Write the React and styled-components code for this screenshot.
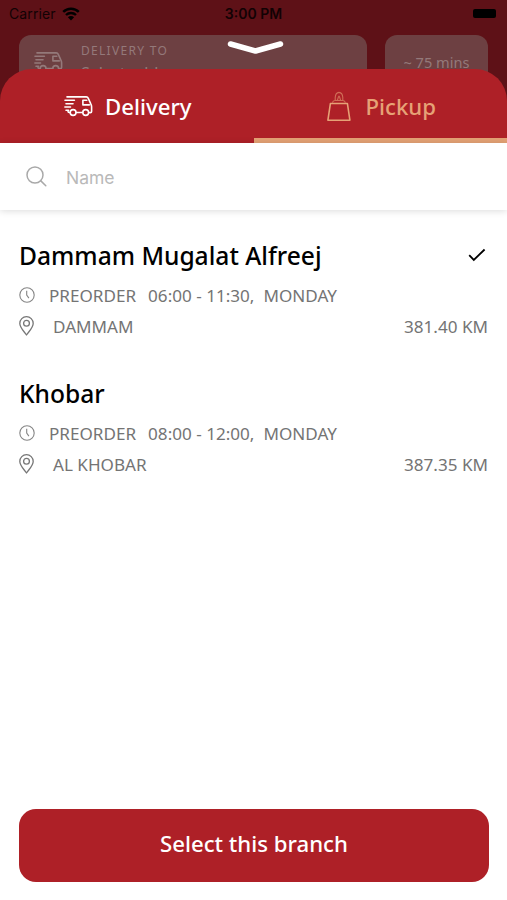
import React, { useState } from "react";
import styled, { createGlobalStyle } from "styled-components";

const GlobalStyle = createGlobalStyle`
  * {
    box-sizing: border-box;
  }
  body {
    margin: 0;
    font-family: "Noto Sans", "Open Sans", sans-serif;
  }
  button {
    font-family: inherit;
    border: none;
    padding: 0;
    cursor: pointer;
  }
  svg {
    display: block;
    flex-shrink: 0;
  }
`;

const Screen = styled.div`
  position: relative;
  width: 507px;
  height: 900px;
  display: flex;
  flex-direction: column;
  overflow: hidden;
  background: #5e1117;
`;

const StatusBar = styled.div`
  height: 35px;
  padding: 0 11px 8px 9px;
  display: grid;
  grid-template-columns: 1fr auto 1fr;
  align-items: center;
  font-family: Inter, sans-serif;
  font-size: 14px;
  color: #120204;
`;

const Carrier = styled.div`
  display: flex;
  align-items: center;
  gap: 6px;
  letter-spacing: 0.1px;
`;

const Clock = styled.div`
  padding-left: 2px;
  font-size: 14px;
  font-weight: 600;
`;

const Battery = styled.div`
  justify-self: end;
  width: 23px;
  height: 9px;
  border-radius: 2px;
  background: #000;
`;

const OrderBar = styled.div`
  height: 70px;
  flex-shrink: 0;
  padding: 0 18px 0 19px;
  display: flex;
  gap: 18px;
`;

const OrderCard = styled.div`
  width: ${(props) => props.width}px;
  height: 60px;
  display: flex;
  border-radius: 12px;
  background: #6d4042;
  color: #94797a;
`;

const Address = styled.div`
  padding: 6px 0 0 15px;
  display: flex;
  gap: 18px;
  svg {
    margin-top: 11px;
  }
`;

const AddressLabel = styled.div`
  padding-top: 1px;
  font-size: 12px;
  line-height: 18px;
  letter-spacing: 1.3px;
`;

const AddressValue = styled.div`
  margin-top: 1px;
  font-size: 16px;
  line-height: 24px;
`;

const Duration = styled.div`
  width: 100%;
  padding-top: 16px;
  text-align: center;
  font-size: 14.6px;
  line-height: 22px;
`;

const CloseButton = styled.button`
  position: absolute;
  top: 40px;
  left: 227px;
  background: none;
`;

const Sheet = styled.div`
  flex: 1;
  margin-top: -36px;
  display: flex;
  flex-direction: column;
  border-radius: 32px 32px 0 0;
  overflow: hidden;
  background: linear-gradient(#ae2027 74px, #fff 74px);
`;

const Tabs = styled.div`
  height: 74px;
  flex-shrink: 0;
  display: flex;
`;

const Tab = styled.button`
  flex: 1;
  display: flex;
  align-items: center;
  justify-content: center;
  gap: ${(props) => props.gap}px;
  padding-top: ${(props) => (props.active ? 5 : 0)}px;
  padding-left: 2px;
  border-bottom: ${(props) => (props.active ? "5px solid #e3a174" : "none")};
  background: none;
  color: ${(props) => (props.active ? "#e6a276" : "#fff")};
  font-size: 22.2px;
  font-weight: 500;
`;

const Search = styled.label`
  height: 67px;
  flex-shrink: 0;
  padding: 0 26px;
  display: flex;
  align-items: center;
  gap: 19px;
  box-shadow: 0 1px 7px rgba(0, 0, 0, 0.14);
`;

const SearchInput = styled.input`
  flex: 1;
  padding: 2px 0 0;
  border: none;
  outline: none;
  font-family: Inter, sans-serif;
  font-size: 17.5px;
  color: #333;
  &::placeholder {
    color: #b9b9b9;
    opacity: 1;
  }
`;

const BranchList = styled.div`
  flex: 1;
  padding: 26px 19px 0;
`;

const Branch = styled.div`
  height: 138px;
  cursor: pointer;
`;

const BranchHead = styled.div`
  height: 38px;
  display: flex;
  align-items: center;
  justify-content: space-between;
  padding-right: 2px;
`;

const BranchName = styled.div`
  font-size: 24.6px;
  font-weight: 500;
  color: #000;
`;

const BranchRow = styled.div`
  height: 30px;
  display: flex;
  align-items: center;
  gap: ${(props) => props.gap}px;
  margin-top: ${(props) => props.offset}px;
  font-size: 17.1px;
  color: #747474;
`;

const Hours = styled.span`
  margin: 0 -5px 0 -2px;
`;

const Distance = styled.span`
  margin-left: auto;
`;

const Footer = styled.div`
  padding: 0 18px 18.5px 19px;
`;

const SelectButton = styled.button`
  width: 100%;
  height: 73px;
  padding-bottom: 3px;
  border-radius: 17px;
  background: #ae2027;
  color: #fff;
  font-size: 22.2px;
  font-weight: 500;
`;

const WifiIcon = () => (
  <svg width="18" height="14" viewBox="0 0 18 14" fill="none">
    <path d="M1.2 4.8a11.2 11.2 0 0 1 15.6 0" stroke="#000" strokeWidth="2.5" />
    <path d="M4 8a7.2 7.2 0 0 1 10 0" stroke="#000" strokeWidth="2.4" />
    <path d="M9 13.4 5.9 10.2a4.4 4.4 0 0 1 6.2 0z" fill="#000" />
  </svg>
);

const TruckIcon = () => (
  <svg
    width="29"
    height="21"
    viewBox="0 0 29 21"
    fill="none"
    stroke="currentColor"
    strokeWidth="1.6"
    strokeLinecap="round"
    strokeLinejoin="round"
  >
    <path d="M3 .9h19.2c1 0 1.7.5 2.1 1.5l2.600 5.800c.5 1 .7 1.600.7 2.600v4.600c0 .9-.4 1.200-1.200 1.200h-.9" />
    <path d="M22.800 4.300h-3.900v4.600h6.400" />
    <path d="M1 4.300h9.400M2 7.700h7M.9 11h5.600" />
    <path d="M2 14.200h2.600M4 14.400v.9c0 .8.4 1.200 1.200 1.200h.7" />
    <path d="M12.300 16.500h6.200" />
    <circle cx="9.100" cy="16.500" r="2.900" />
    <circle cx="21.700" cy="16.500" r="2.900" />
  </svg>
);

const BagIcon = () => (
  <svg width="24" height="31" viewBox="0 0 24 31" fill="none" stroke="currentColor">
    <path d="M3.400 12.500h17l2.500 16.700H.9z" strokeWidth="1.600" strokeLinejoin="round" />
    <path
      d="M5.400 11.700c.4-1.300 1.200-2 2.400-2.200h8.200c1.200.2 2 .9 2.400 2.200M8.200 9.400V6.600c.2-2.800 1.400-5 3.800-5.200 2.400.2 3.600 2.400 3.800 5.200v2.800M10.200 9.400c.9-1.300.6-3 1.800-4.200 1.200 1.200.9 2.900 1.800 4.200"
      strokeWidth="1.100"
      opacity="0.6"
    />
  </svg>
);

const SearchIcon = () => (
  <svg width="21" height="21" viewBox="0 0 21 21" fill="none" stroke="#a9a9a9" strokeWidth="1.5">
    <circle cx="9" cy="9" r="8" />
    <path d="M14.6 14.6l5.2 5.2" strokeLinecap="round" />
  </svg>
);

const ClockIcon = () => (
  <svg width="16" height="16" viewBox="0 0 16 16" fill="none" stroke="#858585">
    <circle cx="8" cy="8" r="7.2" strokeWidth="1.1" />
    <path d="M7.7 3.7v4.4l2.2 3" strokeWidth="1.1" />
  </svg>
);

const PinIcon = () => (
  <svg width="15" height="20" viewBox="0 0 15 20" fill="none" stroke="#777" strokeWidth="1.3">
    <path d="M7.5 19C5.2 15.600.8 11.400.8 7.400a6.700 6.700 0 0 1 13.400 0c0 4-4.400 8.200-6.700 11.600z" strokeLinejoin="round" />
    <circle cx="7.5" cy="7.300" r="2.900" />
  </svg>
);

const CheckIcon = () => (
  <svg width="18" height="14" viewBox="0 0 18 14" fill="none" stroke="#000" strokeWidth="1.8">
    <path d="M1.2 7.2l4.6 4.7L16.6 1.5" />
  </svg>
);

const branches = [
  {
    name: "Dammam Mugalat Alfreej",
    hours: "06:00 - 11:30,",
    day: "MONDAY",
    city: "DAMMAM",
    distance: "381.40 KM",
  },
  {
    name: "Khobar",
    hours: "08:00 - 12:00,",
    day: "MONDAY",
    city: "AL KHOBAR",
    distance: "387.35 KM",
  },
];

const App = () => {
  const [tab, setTab] = useState("pickup");
  const [selected, setSelected] = useState(0);
  const [name, setName] = useState("");

  return (
    <Screen>
      <GlobalStyle />
      <StatusBar>
        <Carrier>
          Carrier
          <WifiIcon />
        </Carrier>
        <Clock>3:00 PM</Clock>
        <Battery />
      </StatusBar>
      <OrderBar>
        <OrderCard width={348}>
          <Address>
            <TruckIcon />
            <div>
              <AddressLabel>DELIVERY TO</AddressLabel>
              <AddressValue>Select address</AddressValue>
            </div>
          </Address>
        </OrderCard>
        <OrderCard width={103}>
          <Duration>~ 75 mins</Duration>
        </OrderCard>
      </OrderBar>
      <CloseButton aria-label="Close">
        <svg width="57" height="15" viewBox="0 0 57 15" fill="none" stroke="#fff" strokeWidth="5.5">
          <path d="M3.5 4L28.5 11L53.5 4" strokeLinecap="round" strokeLinejoin="round" />
        </svg>
      </CloseButton>
      <Sheet>
        <Tabs>
          <Tab gap={12} active={tab === "delivery"} onClick={() => setTab("delivery")}>
            <TruckIcon />
            Delivery
          </Tab>
          <Tab gap={15} active={tab === "pickup"} onClick={() => setTab("pickup")}>
            <BagIcon />
            Pickup
          </Tab>
        </Tabs>
        <Search>
          <SearchIcon />
          <SearchInput
            placeholder="Name"
            value={name}
            onChange={(e) => setName(e.target.value)}
          />
        </Search>
        <BranchList>
          {branches.map((branch, i) => (
            <Branch key={branch.name} onClick={() => setSelected(i)}>
              <BranchHead>
                <BranchName>{branch.name}</BranchName>
                {selected === i && <CheckIcon />}
              </BranchHead>
              <BranchRow gap={14} offset={6}>
                <ClockIcon />
                <span>PREORDER</span>
                <Hours>{branch.hours}</Hours>
                <span>{branch.day}</span>
              </BranchRow>
              <BranchRow gap={19} offset={1}>
                <PinIcon />
                {branch.city}
                <Distance>{branch.distance}</Distance>
              </BranchRow>
            </Branch>
          ))}
        </BranchList>
        <Footer>
          <SelectButton>Select this branch</SelectButton>
        </Footer>
      </Sheet>
    </Screen>
  );
};

export default App;
